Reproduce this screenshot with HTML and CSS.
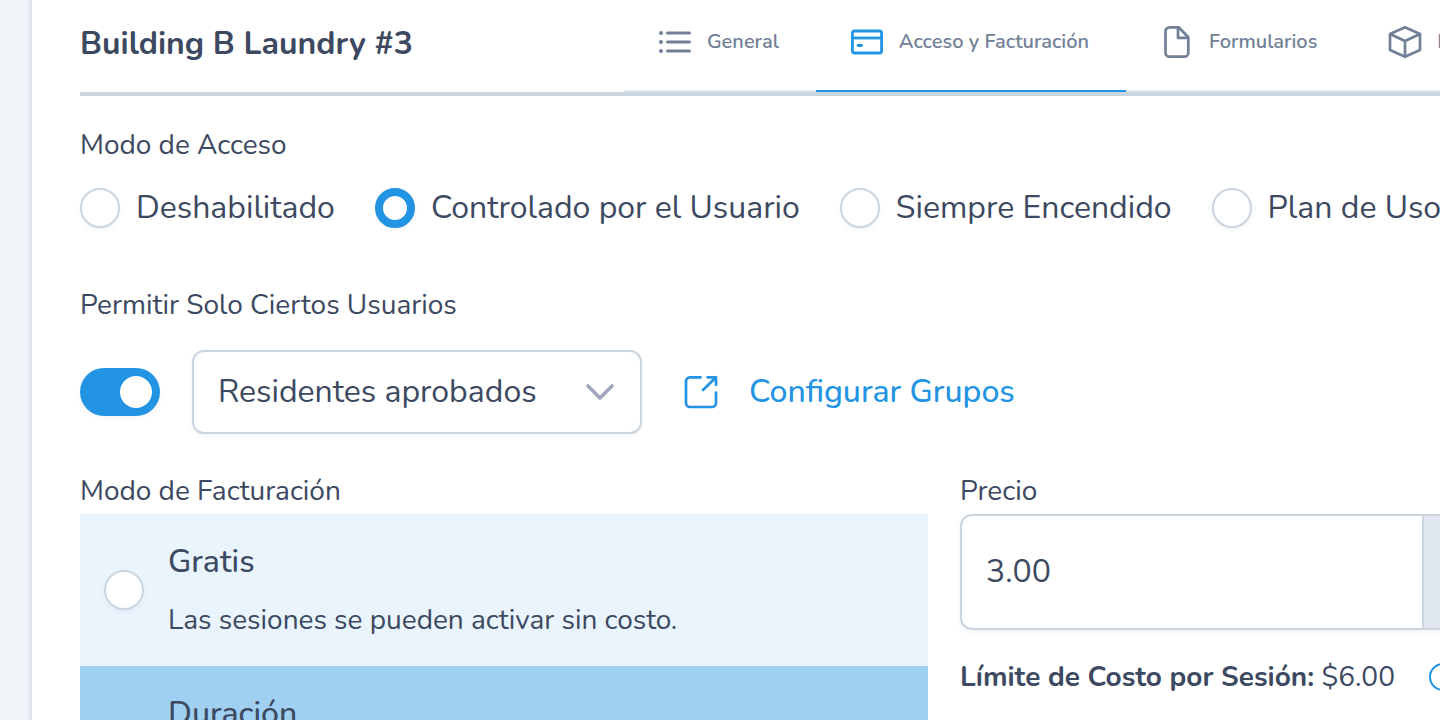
FILE: index.html
```html
<!DOCTYPE html>
<html lang="es">
<head>
<meta charset="utf-8">
<meta name="viewport" content="width=device-width, initial-scale=1">
<title>Building B Laundry #3</title>
<link rel="stylesheet" href="styles.css">
</head>
<body>
<main class="card">
  <header class="header">
    <h1 class="title">Building B Laundry #3</h1>
    <nav class="tabs">
      <button class="tab" type="button">
        <svg class="icon" viewBox="0 0 34 34"><g fill="none" stroke="currentColor" stroke-width="3" stroke-linecap="round"><path d="M9.500 8h22M9.500 17h22M9.500 26h22"/></g><g fill="currentColor"><circle cx="3" cy="8" r="2"/><circle cx="3" cy="17" r="2"/><circle cx="3" cy="26" r="2"/></g></svg>
        <span>General</span>
      </button>
      <button class="tab tab-active" type="button" aria-current="page">
        <svg class="icon" viewBox="0 0 34 34" fill="none" stroke="currentColor" stroke-width="2.800" stroke-linecap="round"><rect x="2.400" y="6" width="29.200" height="22" rx="2"/><path d="M2 13h30" stroke-linecap="butt"/><path d="M8 20.500h3.500"/></svg>
        <span>Acceso y Facturación</span>
      </button>
      <button class="tab" type="button">
        <svg class="icon" viewBox="0 0 34 34" fill="none" stroke="currentColor" stroke-width="2.700" stroke-linejoin="round"><path d="M9.500 2.300h9.200l9.600 9.900v15.500a4 4 0 0 1-4 4H9.500a4 4 0 0 1-4-4V6.300a4 4 0 0 1 4-4z"/><path d="M18 2.300v10.500h10.500"/></svg>
        <span>Formularios</span>
      </button>
      <button class="tab" type="button">
        <svg class="icon" viewBox="0 0 34 34" fill="none" stroke="currentColor" stroke-width="2.700" stroke-linejoin="round"><path d="M17 2.200l15 6.800v16L17 31.800 2 25V9z"/><path d="M2 9l15 7 15-7M17 16v15.800"/></svg>
        <span>I</span>
      </button>
    </nav>
  </header>

  <fieldset class="access">
    <legend class="label">Modo de Acceso</legend>
    <div class="choices">
      <label class="choice"><input class="radio" type="radio" name="access">Deshabilitado</label>
      <label class="choice"><input class="radio" type="radio" name="access" checked>Controlado por el Usuario</label>
      <label class="choice"><input class="radio" type="radio" name="access">Siempre Encendido</label>
      <label class="choice"><input class="radio" type="radio" name="access">Plan de Uso</label>
    </div>
  </fieldset>

  <section class="users">
    <label class="label" for="restrict">Permitir Solo Ciertos Usuarios</label>
    <div class="users-row">
      <input class="switch" id="restrict" type="checkbox" role="switch" checked>
      <div class="select-wrap">
        <select class="select" aria-label="Grupo de usuarios"><option>Residentes aprobados</option></select>
        <svg class="chevron" viewBox="0 0 28 18" fill="none" stroke="currentColor" stroke-width="3.600" stroke-linecap="round" stroke-linejoin="round"><path d="M2 3l12 12L26 3"/></svg>
      </div>
      <a class="groups-link" href="#">
        <svg class="icon" viewBox="0 0 34 34" fill="none" stroke="currentColor" stroke-width="2.700" stroke-linecap="round" stroke-linejoin="round"><path d="M16.500 2.300H6a4 4 0 0 0-4 4V28a4 4 0 0 0 4 4h22a4 4 0 0 0 4-4V17.500"/><path d="M19 15L32 2.300M23.500 2.300H32v7.500"/></svg>
        <span>Configurar Grupos</span>
      </a>
    </div>
  </section>

  <div class="billing">
    <fieldset class="modes">
      <legend class="label">Modo de Facturación</legend>
      <label class="mode">
        <input class="radio" type="radio" name="billing">
        <span class="mode-text"><span class="mode-name">Gratis</span><span class="mode-note">Las sesiones se pueden activar sin costo.</span></span>
      </label>
      <div class="mode mode-selected">
        <span class="mode-text mode-indent"><span class="mode-name">Duración</span></span>
      </div>
    </fieldset>
    <div class="price">
      <label class="label" for="price">Precio</label>
      <div class="price-group">
        <input class="price-input" id="price" type="text" value="3.00">
        <span class="price-unit"></span>
      </div>
      <div class="limit">
        <span><strong>Límite de Costo por Sesión:</strong> $6.00</span>
        <svg class="info" viewBox="0 0 28 28" fill="none" stroke="currentColor" stroke-width="2"><circle cx="14" cy="14" r="13"/></svg>
      </div>
    </div>
  </div>
</main>
</body>
</html>
```
FILE: styles.css
```css
* {
  box-sizing: border-box;
}

body {
  margin: 0;
  height: 100vh;
  overflow: hidden;
  padding-left: 30px;
  background: #f0f4f9;
  color: #3c4960;
  font-family: Nunito, Lato, sans-serif;
  font-size: 32px;
  line-height: 40px;
}

button, input, select {
  font: inherit;
  color: inherit;
}

fieldset {
  min-width: 0;
  margin: 0;
  padding: 0;
  border: 0;
}

legend {
  padding: 0;
}

.card {
  height: 100vh;
  padding-left: 48px;
  border-left: 2px solid #dde3ea;
  background: #fff;
  box-shadow: 0 0 4px rgba(60, 73, 96, 0.15);
  overflow: hidden;
}

.header {
  display: flex;
  border-bottom: 4px solid #cbd5e0;
}

.title {
  flex: 0 0 40%;
  margin: 0;
  padding-top: 24px;
  font-size: 32px;
  line-height: 40px;
  white-space: nowrap;
}

.tabs {
  display: flex;
  flex: 1;
  min-width: 0;
}

.tab {
  display: flex;
  flex: none;
  align-items: center;
  gap: 15px;
  height: 92px;
  padding: 0 37px 6px 34px;
  border: 0;
  border-bottom: 2px solid #e2e8f0;
  background: none;
  color: #718096;
  font-size: 20px;
  font-weight: 600;
  line-height: 24px;
  white-space: nowrap;
}

.tab-active {
  border-color: #2294e3;
}

.tab-active .icon {
  color: #2294e3;
}

.icon {
  flex: none;
  width: 34px;
  height: 34px;
}

.label {
  display: block;
  font-size: 28px;
  line-height: 36px;
}

.access {
  margin-top: 31px;
}

.choices {
  display: flex;
  gap: 40px;
  padding-top: 25px;
}

.choice {
  display: flex;
  flex: none;
  align-items: center;
  gap: 16px;
}

.radio {
  flex: none;
  appearance: none;
  width: 40px;
  height: 40px;
  margin: 0;
  border: 2px solid #cbd5e0;
  border-radius: 50%;
  background: #fff;
  box-shadow: 0 2px 4px rgba(60, 73, 96, 0.06);
}

.radio:checked {
  border: 8px solid #2294e3;
}

.users {
  padding-top: 59px;
}

.users-row {
  display: flex;
  align-items: center;
  padding-top: 27px;
}

.switch {
  flex: none;
  appearance: none;
  width: 80px;
  height: 48px;
  margin: 0 32px 0 0;
  padding: 8px;
  border-radius: 24px;
  background: #2294e3;
  box-shadow: 0 2px 4px rgba(60, 73, 96, 0.06);
}

.switch::before {
  content: "";
  display: block;
  width: 32px;
  height: 32px;
  margin-left: auto;
  border-radius: 50%;
  background: #fff;
}

.switch:not(:checked)::before {
  margin-left: 0;
}

.select-wrap {
  display: grid;
  align-items: center;
  width: 450px;
}

.select {
  grid-area: 1 / 1;
  appearance: none;
  width: 100%;
  height: 84px;
  padding: 0 72px 0 24px;
  border: 2px solid #cbd5e0;
  border-radius: 12px;
  background: #fff;
  box-shadow: 0 2px 4px rgba(60, 73, 96, 0.06);
}

.chevron {
  grid-area: 1 / 1;
  justify-self: end;
  width: 28px;
  height: 18px;
  margin-right: 28px;
  color: #a0a9b9;
  pointer-events: none;
}

.groups-link {
  display: flex;
  align-items: center;
  gap: 31px;
  margin-left: 42px;
  color: #2294e3;
  font-weight: 500;
  text-decoration: none;
}

.billing {
  display: grid;
  grid-template-columns: 53fr 30fr;
  gap: 32px;
  padding-top: 39px;
}

.billing .label {
  padding-bottom: 5px;
}

.mode {
  display: flex;
  align-items: center;
  gap: 24px;
  min-height: 152px;
  padding: 0 24px;
  background: #e9f4fd;
}

.mode-selected {
  background: #9fcff1;
}

.mode-text {
  display: flex;
  flex-direction: column;
  gap: 20px;
}

.mode-indent {
  align-self: flex-start;
  padding: 28px 0 0 64px;
}

.mode-name {
  font-weight: 500;
}

.mode-note {
  font-size: 28px;
  line-height: 36px;
}

.price {
  min-width: 0;
}

.price-group {
  display: flex;
  height: 116px;
  border: 2px solid #cbd5e0;
  border-right: 0;
  border-radius: 12px 0 0 12px;
  background: #fff;
  box-shadow: 0 2px 4px rgba(60, 73, 96, 0.06);
  overflow: hidden;
}

.price-input {
  flex: 1;
  min-width: 0;
  padding: 0 24px;
  border: 0;
  background: none;
}

.price-unit {
  width: 18px;
  border-left: 2px solid #cbd5e0;
  background: #e1e7ee;
}

.limit {
  display: flex;
  align-items: center;
  gap: 34px;
  padding-top: 29px;
  font-size: 28px;
  line-height: 36px;
  white-space: nowrap;
}

.info {
  flex: none;
  width: 28px;
  height: 28px;
  color: #2294e3;
}
```
